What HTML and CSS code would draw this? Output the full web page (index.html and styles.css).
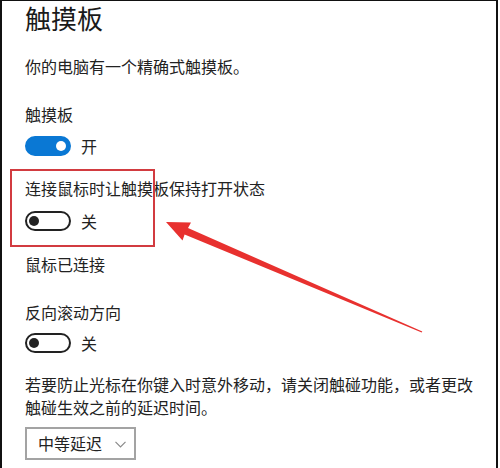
FILE: index.html
```html
<!DOCTYPE html>
<html lang="zh-CN">
<head>
<meta charset="utf-8">
<title>触摸板</title>
<link rel="stylesheet" href="styles.css">
</head>
<body>
<div class="frame">
  <h1 class="title">触摸板</h1>
  <p class="desc">你的电脑有一个精确式触摸板。</p>

  <div class="label l-touch">触摸板</div>
  <div class="toggle-row t1">
    <span class="toggle on"><span class="knob"></span></span>
    <span class="state">开</span>
  </div>

  <div class="label l-keep">连接鼠标时让触摸板保持打开状态</div>
  <div class="toggle-row t2">
    <span class="toggle"><span class="knob"></span></span>
    <span class="state">关</span>
  </div>

  <div class="label l-mouse">鼠标已连接</div>

  <div class="label l-rev">反向滚动方向</div>
  <div class="toggle-row t3">
    <span class="toggle"><span class="knob"></span></span>
    <span class="state">关</span>
  </div>

  <p class="para">若要防止光标在你键入时意外移动，请关闭触碰功能，或者更改触碰生效之前的延迟时间。</p>

  <div class="select">
    <span>中等延迟</span>
    <svg class="chev" width="11" height="7" viewBox="0 0 11 7"><polyline points="0.5,0.8 5.5,5.8 10.5,0.8" fill="none" stroke="#8a8a8a" stroke-width="1.2"/></svg>
  </div>

  <div class="highlight"></div>
  <svg class="arrow" width="500" height="468" viewBox="0 0 500 468">
    <polygon points="166,222 191,222.5 188,227.9 422.3,331.4 421.7,332.6 184.6,234.5 182.5,240.5" fill="#e8312f"/>
  </svg>
</div>
</body>
</html>
```

FILE: styles.css
```css
html, body {
  margin: 0;
  padding: 0;
  background: #ffffff;
}

body {
  font-family: "Noto Sans CJK SC", "Microsoft YaHei", sans-serif;
  color: #222222;
}

.frame {
  position: relative;
  box-sizing: border-box;
  width: 498px;
  height: 468px;
  border-top: 1px solid #111111;
  border-left: 2px solid #111111;
  border-right: 2px solid #111111;
  padding-left: 23px;
  overflow: hidden;
  display: flex;
  flex-direction: column;
  align-items: flex-start;
}

.title {
  margin: 0;
  font-size: 26px;
  font-weight: 400;
  line-height: 34px;
  color: #1a1a1a;
}

.desc {
  margin: 20px 0 0;
  font-size: 16px;
  line-height: 22px;
}

.label {
  font-size: 16px;
  line-height: 22px;
}

.l-touch { margin-top: 26px; }
.l-keep { margin-top: 21px; }
.l-mouse { margin-top: 22px; }
.l-rev { margin-top: 26px; }

.toggle-row {
  display: flex;
  align-items: center;
  gap: 10px;
  height: 20px;
  font-size: 16px;
  line-height: 20px;
}

.t1 { margin-top: 11px; }
.t2 { margin-top: 12px; }
.t3 { margin-top: 10px; }

.toggle {
  position: relative;
  box-sizing: border-box;
  width: 46px;
  height: 20px;
  border: 2px solid #222222;
  border-radius: 10px;
  background: #ffffff;
}

.toggle .knob {
  position: absolute;
  top: 3px;
  left: 2px;
  width: 10px;
  height: 10px;
  border-radius: 50%;
  background: #222222;
}

.toggle.on {
  background: #0a78d4;
  border-color: #0a78d4;
}

.toggle.on .knob {
  left: auto;
  right: 3px;
  background: #ffffff;
}

.para {
  margin: 20px 0 0;
  width: 456px;
  font-size: 16px;
  line-height: 23px;
}

.select {
  margin-top: 8px;
  box-sizing: border-box;
  width: 111px;
  height: 33px;
  border: 2px solid #a3a3a3;
  padding-left: 11px;
  display: flex;
  align-items: center;
  font-size: 16px;
  line-height: 29px;
}

.chev {
  margin-left: 13px;
  margin-top: 1px;
}

.highlight {
  position: absolute;
  left: 8px;
  top: 168px;
  width: 145px;
  height: 78px;
  box-sizing: border-box;
  border: 2px solid #d23b40;
}

.arrow {
  position: absolute;
  left: -2px;
  top: -1px;
}
```
